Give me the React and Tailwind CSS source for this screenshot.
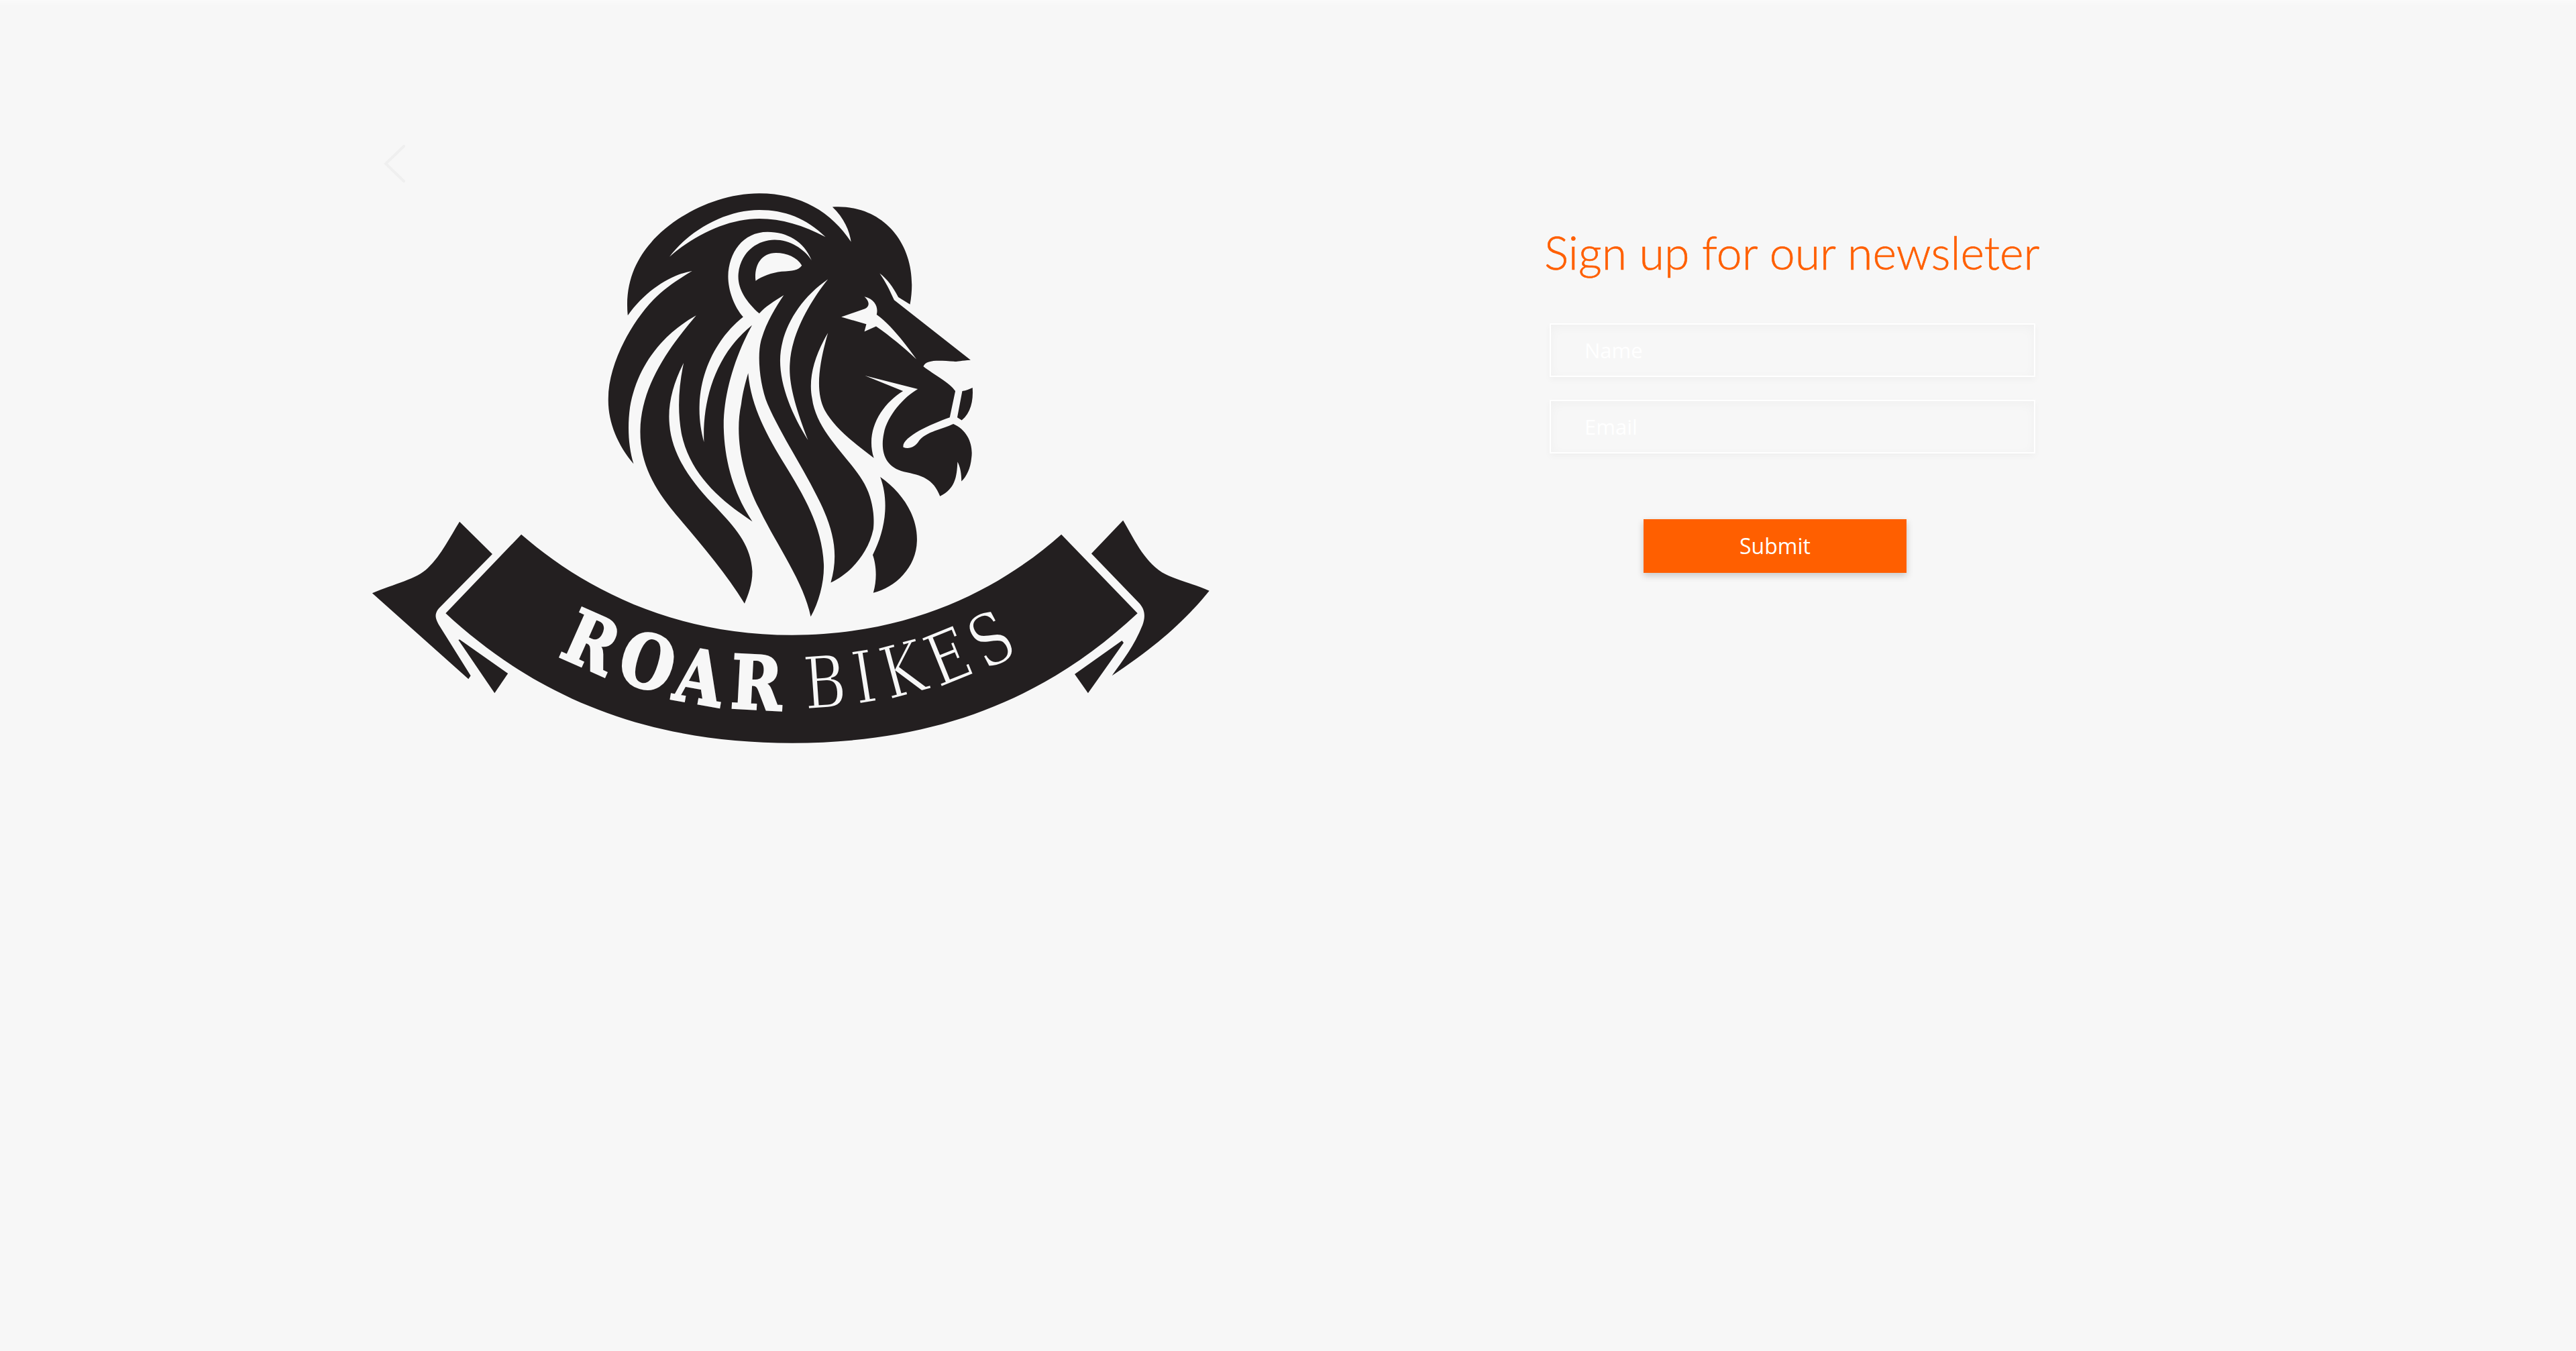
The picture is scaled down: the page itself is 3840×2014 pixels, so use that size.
const MANE =
  'M207 485C195 370 240 290 290 235C365 150 520 65 680 65C830 65 940 130 1010 232C1005 195 985 150 943 112C1130 100 1260 250 1222 447L1180 422C1160 385 1140 360 1113 340C1135 370 1150 400 1165 432L1440 638C1400 640 1390 645 1380 643C1330 640 1280 635 1270 660C1310 690 1365 715 1385 745L1365 835C1290 860 1190 905 1198 938C1215 945 1240 940 1255 915C1280 885 1340 875 1378 858C1430 880 1450 930 1443 975C1440 1010 1425 1040 1407 1055C1407 1030 1403 1005 1393 988C1390 1040 1385 1080 1330 1106C1305 1045 1265 1035 1200 1022C1130 1005 1115 950 1128 890C1140 830 1200 765 1250 738L1060 692L1197 745C1120 790 1060 880 1092 975C1010 915 950 870 915 810C880 745 895 650 927 545C880 620 855 700 870 770C885 880 990 960 1050 1050C1090 1110 1095 1180 1090 1220C1070 1310 1000 1375 937 1403C965 1310 950 1230 900 1130C840 1010 760 900 710 790C680 720 670 610 690 560C705 510 740 455 768 415C735 435 700 455 680 478C630 435 600 390 605 340C615 260 680 225 735 225C790 225 840 255 868 295C840 230 780 198 710 198C620 198 570 270 568 350C568 400 590 455 622 490C530 560 470 670 465 790C463 840 470 880 481 920C475 780 520 620 654 518C590 630 550 760 552 870C555 990 590 1100 655 1193C540 1120 430 1030 400 890C385 810 390 730 408 648C370 720 350 790 357 860C365 960 430 1050 510 1130C590 1210 650 1270 655 1365C655 1410 640 1445 627 1475C560 1370 470 1270 390 1180C310 1090 250 1000 252 880C255 730 350 600 453 485C330 550 240 660 215 800C205 870 210 940 228 995C170 930 135 850 137 770C137 660 210 520 300 430C340 390 390 360 438 332C360 345 270 400 207 485Z'

const CUTOUTS = [
  'M357 283C430 190 560 122 680 122C770 122 850 150 918 215C840 175 760 152 680 152C570 152 450 205 357 283Z',
  'M667 366C660 310 690 270 740 270C780 270 815 285 833 313C820 330 800 332 760 334C725 338 690 350 667 366Z',
  'M927 360C820 430 755 540 755 640C755 730 800 830 855 913C810 800 785 720 790 650C795 550 860 440 927 360Z',
  'M975 490L1065 515L1058 540L1100 522C1150 555 1200 595 1245 635C1200 575 1150 515 1102 482C1108 460 1100 430 1058 420C1080 440 1075 455 1060 462Z',
]

const STRANDS = [
  'M640 683C650 800 710 900 770 995C830 1090 905 1200 912 1340C914 1400 895 1470 865 1520C840 1400 740 1270 680 1150C620 1040 590 900 615 790C620 750 630 715 640 683Z',
  'M1115 1040C1190 1090 1250 1170 1247 1260C1245 1350 1170 1420 1090 1438C1105 1390 1100 1340 1088 1308C1130 1230 1150 1130 1115 1040Z',
  'M1410 745C1425 742 1435 738 1447 733C1450 780 1440 820 1408 845L1392 835Z',
]

const BANNER = [
  'M298 140C400 360 560 590 785 590C1010 590 1170 360 1269 140L1406 493C1240 880 1040 1073 785 1073C530 1073 330 880 162 493Z',
  'M187 83L246 228L150 470C140 500 145 520 150 545L207 772L203 787L30 403C70 360 110 340 130 290C155 230 170 150 187 83Z',
  'M187 610L274 762L250 850L185 612Z',
  'M1380 77L1323 226L1410 450C1420 480 1420 510 1415 545C1400 640 1380 700 1360 772C1440 640 1490 530 1535 392C1500 355 1470 340 1450 310C1415 250 1400 160 1380 77Z',
  'M1378 615L1293 765L1317 850L1381 625Z',
]

// baseline centre and tilt of each letter, in page pixels minus the logo offset
const ROAR = [
  ['R', 336, 733, 24],
  ['O', 424, 764, 17],
  ['A', 506, 788, 10],
  ['R', 596, 797, 3],
]
const BIKES = [
  ['B', 702, 795, -4],
  ['I', 764, 787, -9],
  ['K', 826, 775, -15],
  ['E', 898, 754, -22],
  ['S', 965, 727, -28],
]

function Logo() {
  return (
    <svg viewBox="0 0 1300 870" className="block h-[870px] w-[1300px] shrink-0">
      <g transform="translate(320 0) scale(0.4145 0.4337)">
        <path d={MANE} fill="#231f20" />
        {CUTOUTS.map((d) => (
          <path key={d} d={d} fill="#f7f7f7" />
        ))}
        {STRANDS.map((d) => (
          <path key={d} d={d} fill="#231f20" />
        ))}
      </g>
      <g transform="translate(0 490) scale(0.8291 0.3333)">
        {BANNER.map((d) => (
          <path key={d} d={d} fill="#231f20" />
        ))}
      </g>
      {ROAR.map(([ch, x, y, r], i) => (
        <text
          key={i}
          transform={`translate(${x} ${y}) rotate(${r}) scale(0.92 1.1)`}
          textAnchor="middle"
          fill="#f7f7f7"
          stroke="#f7f7f7"
          strokeWidth="3"
          fontSize="100"
          fontWeight="700"
          fontFamily="'DejaVu Serif', serif"
        >
          {ch}
        </text>
      ))}
      {BIKES.map(([ch, x, y, r], i) => (
        <text
          key={i}
          transform={`translate(${x} ${y}) rotate(${r}) scale(0.86 1.08)`}
          textAnchor="middle"
          fill="#f7f7f7"
          stroke="#231f20"
          strokeWidth="2"
          fontSize="100"
          fontFamily="'DejaVu Serif', serif"
        >
          {ch}
        </text>
      ))}
    </svg>
  )
}

function Field({ placeholder, type = 'text' }) {
  return (
    <input
      type={type}
      placeholder={placeholder}
      className="h-[80px] w-[724px] border-2 border-white bg-transparent pl-[50px] font-['Open_Sans',sans-serif] text-[31px] text-white shadow-[0_4px_10px_rgba(0,0,0,0.035),inset_0_4px_16px_rgba(0,0,0,0.03)] outline-none placeholder:text-white"
    />
  )
}

export default function App() {
  return (
    <div className="relative flex h-screen overflow-hidden bg-[#f7f7f7] pl-[530px] pt-[260px] shadow-[inset_0_10px_8px_-6px_rgba(255,255,255,0.5)]">
      <svg
        viewBox="0 0 32 56"
        className="absolute left-[572px] top-[216px] h-[56px] w-[32px]"
        fill="none"
        stroke="#efefef"
        strokeWidth="4"
        strokeLinecap="round"
      >
        <path d="M30 2L3 28L30 54" />
      </svg>

      <Logo />

      <div className="ml-[472px] flex w-[760px] flex-col items-start">
        <h1 className="mt-[66px] whitespace-nowrap font-['Lato',sans-serif] text-[68px] font-light leading-[100px] text-[#ff5f00] [-webkit-text-stroke:0.6px_#ff5f00]">
          Sign up for our newsleter
        </h1>
        <form className="ml-[8px] mt-[56px] flex flex-col gap-[34px]">
          <Field placeholder="Name" />
          <Field placeholder="Email" type="email" />
          <button
            type="button"
            className="ml-[140px] mt-[64px] h-[80px] w-[392px] bg-[#ff5f00] font-['Open_Sans',sans-serif] text-[32px] text-white shadow-[0_4px_10px_rgba(0,0,0,0.2)]"
          >
            Submit
          </button>
        </form>
      </div>
    </div>
  )
}
